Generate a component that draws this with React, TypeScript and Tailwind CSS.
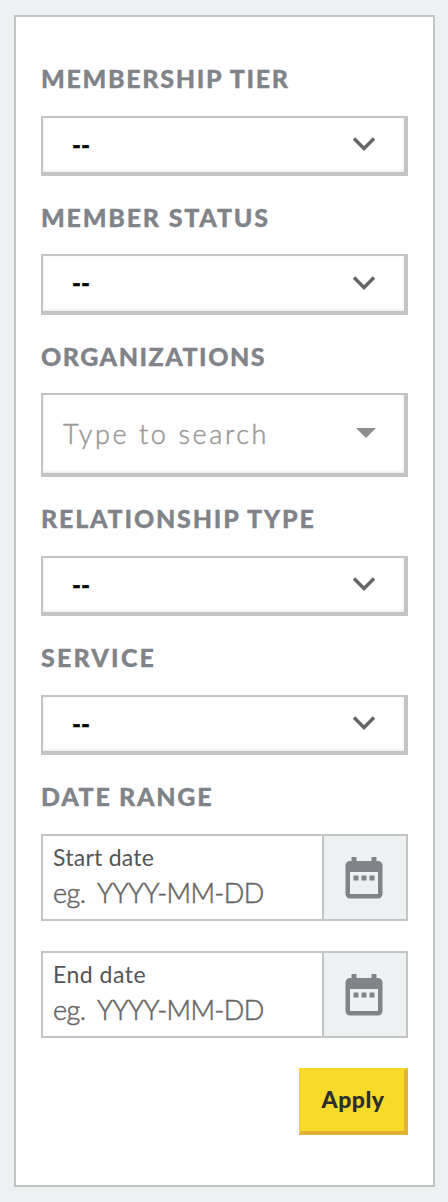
import { useState } from "react"
import type { ReactNode } from "react"

const FILTERS = {
  tier: "Membership Tier",
  status: "Member Status",
  relationship: "Relationship Type",
  service: "Service",
} as const

type FilterKey = keyof typeof FILTERS

function Label({ children, className = "h-[79px] pt-[3px]" }: { children: ReactNode; className?: string }) {
  return (
    <div
      className={`flex items-center whitespace-nowrap font-['Lato'] text-[25px] leading-none font-black uppercase text-[#808388] [-webkit-text-stroke:0.3px_#808388] ${className}`}
    >
      {children}
    </div>
  )
}

function SelectBox({ value, className = "h-[60px]" }: { value: string; className?: string }) {
  return (
    <button
      type="button"
      className={`flex w-full items-center justify-between border-2 border-r-4 border-b-4 border-[#c4c4c4] bg-white pr-[28px] pb-[2px] pl-[29px] shadow-[inset_0_-1px_3px_rgba(0,0,0,0.1)] ${className}`}
    >
      <span className="pt-[1px] font-['Lato'] text-[24px] leading-none font-black text-black [-webkit-text-stroke:0.4px_black]">
        {value}
      </span>
      <svg width="24" height="16" viewBox="0 0 24 16" fill="none" stroke="#666" strokeWidth="3.5">
        <path d="M2 2.500 12 12.500 22 2.500" />
      </svg>
    </button>
  )
}

function CalendarIcon() {
  return (
    <svg width="38" height="42" viewBox="0 0 38 42" fill="#808388">
      <path
        fillRule="evenodd"
        d="M6.500 0h5v4h15V0h5v4H33a4.500 4.500 0 0 1 4.500 4.500V37a4.500 4.500 0 0 1-4.500 4.500H5A4.500 4.500 0 0 1 .5 37V8.500A4.500 4.500 0 0 1 5 4h1.500ZM5 15v22h28V15Z"
      />
      <path d="M8.500 18.500h5v5h-5zM16.500 18.500h5v5h-5zM24.500 18.500h5v5h-5z" />
    </svg>
  )
}

function DateField({ label, labelClass }: { label: string; labelClass: string }) {
  return (
    <div className="flex h-[87px] border-2 border-[#c4c4c4]">
      <div className="flex-1 pt-[8px] pl-[10px] font-['Lato'] whitespace-nowrap">
        <div className={`text-[23px] leading-[26px] text-[#555] ${labelClass}`}>{label}</div>
        <div className="mt-[7px] text-[27px] leading-[32px] font-light tracking-[-0.6px] text-[#666] [-webkit-text-stroke:0.5px_#666] [word-spacing:6px]">
          eg. YYYY-MM-DD
        </div>
      </div>
      <button
        type="button"
        aria-label={`Choose ${label}`}
        className="flex w-[84px] items-center justify-center border-l-2 border-[#c4c4c4] bg-[#edf1f2] pr-[2px]"
      >
        <CalendarIcon />
      </button>
    </div>
  )
}

export default function App() {
  const [values] = useState<Record<FilterKey, string>>({
    tier: "--",
    status: "--",
    relationship: "--",
    service: "--",
  })

  return (
    <div className="h-[1202px] w-[448px] bg-[#edf1f2] pt-[15px] pl-[14px]">
      <div className="h-[1172px] w-[421px] border-2 border-[#c4c4c4] bg-white px-[25px] pt-[20px]">
        <Label className="h-[79px] pt-[3px] tracking-[1.7px]">{FILTERS.tier}</Label>
        <SelectBox value={values.tier} />
        <Label className="h-[78px] pt-[4px] tracking-[1.8px]">{FILTERS.status}</Label>
        <SelectBox value={values.status} className="h-[61px]" />
        <Label className="h-[78px] pt-[4px] tracking-[1.5px]">Organizations</Label>

        <div className="flex h-[84px] items-center justify-between border-2 border-r-4 border-b-4 border-[#c4c4c4] bg-white pr-[28px] pb-[2px] pl-[20px] shadow-[inset_0_-1px_3px_rgba(0,0,0,0.1)]">
          <span className="font-['Lato'] text-[27px] leading-none font-light tracking-[2.6px] text-[#999] [-webkit-text-stroke:0.5px_#999]">
            Type to search
          </span>
          <svg width="20" height="10" viewBox="0 0 20 10" fill="#8d8d8d">
            <path d="M0 0h20L10 10Z" />
          </svg>
        </div>

        <Label className="h-[79px] pt-[3px] tracking-[1.8px]">{FILTERS.relationship}</Label>
        <SelectBox value={values.relationship} />
        <Label className="h-[79px] pt-[3px] tracking-[2.2px]">{FILTERS.service}</Label>
        <SelectBox value={values.service} />
        <Label className="h-[79px] pt-[3px] tracking-[1.7px]">Date Range</Label>

        <div className="flex flex-col gap-[30px]">
          <DateField label="Start date" labelClass="tracking-[0.25px]" />
          <DateField label="End date" labelClass="tracking-[0.5px]" />
        </div>

        <div className="mt-[30px] flex justify-end">
          <button
            type="button"
            className="h-[67px] w-[109px] border-2 border-r-4 border-b-4 border-[#f9d71c] border-r-[#e2b236] border-b-[#e2b236] bg-[#f8da2b] pb-[3px] pl-[1px] font-['Lato'] text-[23px] leading-none font-black tracking-[0.5px] text-[#2d2d2d]"
          >
            Apply
          </button>
        </div>
      </div>
    </div>
  )
}
